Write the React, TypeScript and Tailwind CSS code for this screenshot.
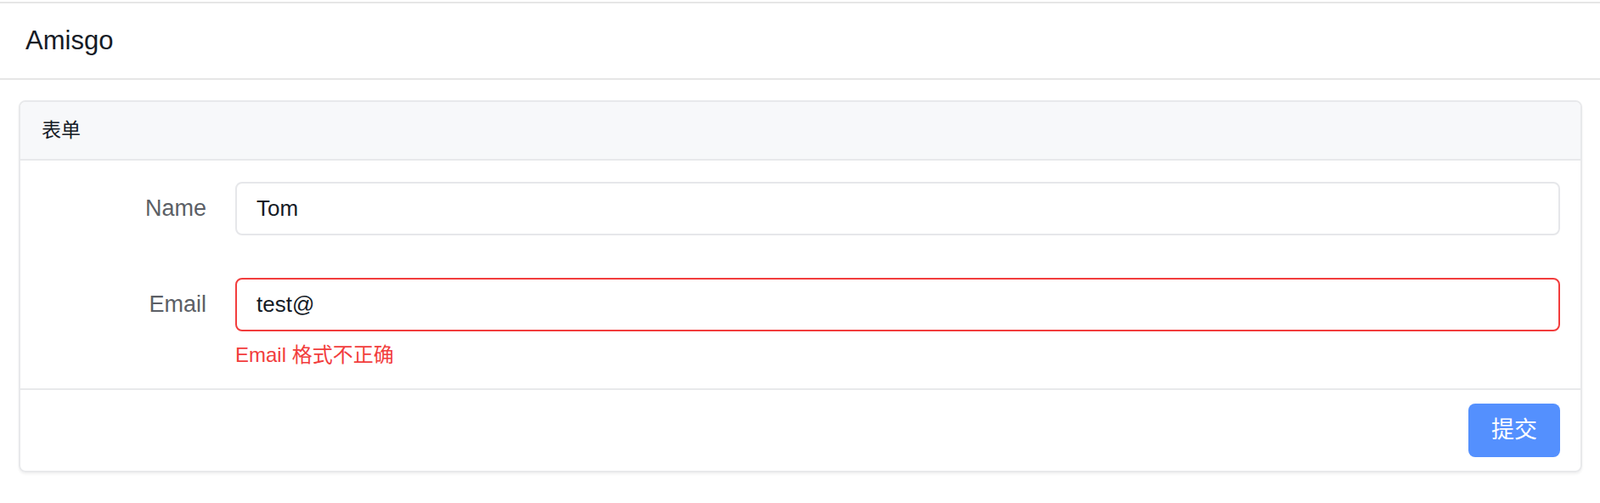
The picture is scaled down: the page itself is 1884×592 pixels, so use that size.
import React from 'react';

const font = { fontFamily: '"Liberation Sans", "Noto Sans CJK SC", sans-serif' };

const App = () => {
  return (
    <div className="min-h-screen bg-white pt-[2px]" style={font}>
      <header className="h-[92px] border-t-2 border-b-2 border-[#e6e6e6] flex items-center px-[30px]">
        <h1 className="text-[31px] text-[#151b26]">Amisgo</h1>
      </header>

      <div className="mt-[24px] ml-[22px] mr-[21px] rounded-[8px] border-2 border-[#e8e9eb] shadow-[0_2px_3px_rgba(0,0,0,0.06)] overflow-hidden">
        <div className="h-[69px] bg-[#f7f8fa] border-b-2 border-[#e8e9eb] flex items-center px-[25px]">
          <span className="text-[23px] text-[#151b26]">表单</span>
        </div>

        <form className="pt-[25px] pb-[21px] pr-[24px]">
          <div className="flex items-center">
            <label className="w-[221px] pr-[2px] text-right text-[27px] text-[#5c5f66]">Name</label>
            <input
              className="ml-[32px] flex-1 h-[63px] rounded-[8px] border-2 border-[#e6e7ea] px-[23px] text-[26px] text-[#151b26] outline-none"
              defaultValue="Tom"
            />
          </div>

          <div className="flex items-start mt-[50px]">
            <label className="w-[221px] pr-[2px] h-[63px] flex items-center justify-end text-[27px] text-[#5c5f66]">Email</label>
            <div className="ml-[32px] flex-1">
              <input
                className="w-full h-[63px] rounded-[8px] border-2 border-[#f23d3d] px-[23px] text-[26px] text-[#151b26] outline-none"
                defaultValue="test@"
              />
              <p className="mt-[10px] text-[24px] leading-[36px] text-[#f23d3d]">Email 格式不正确</p>
            </div>
          </div>
        </form>

        <div className="border-t-2 border-[#e8e9eb] py-[16px] pr-[24px] flex justify-end">
          <button className="h-[63px] px-[27px] rounded-[8px] bg-[#5490fe] text-white text-[27px]">提交</button>
        </div>
      </div>
    </div>
  );
};

export default App;
